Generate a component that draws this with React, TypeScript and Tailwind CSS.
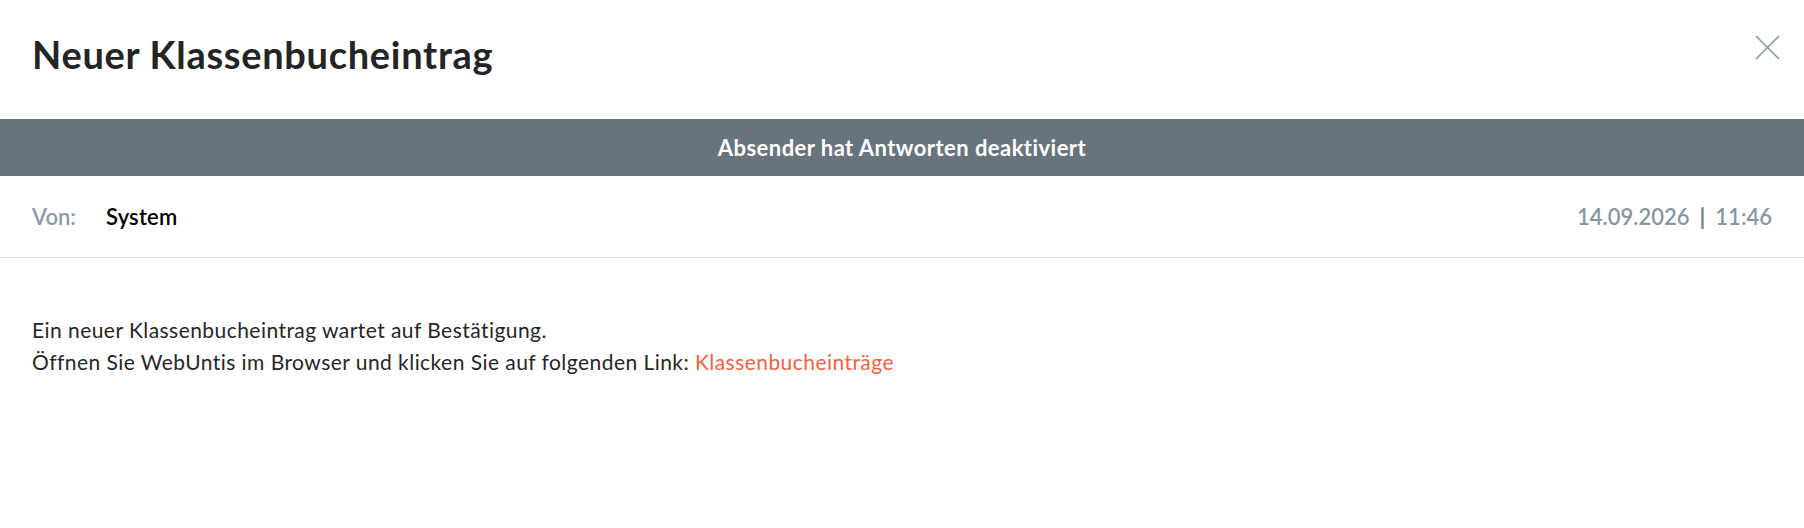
export default function App() {
  return (
    <div className="w-full min-h-[528px] bg-white font-['Lato','Noto_Sans',sans-serif] text-[#262626]">
      {/* Header */}
      <div className="h-[119px] flex items-start justify-between px-8">
        <h1 className="pt-[32px] text-[38px] leading-[44px] font-bold tracking-[0.7px] text-[#242424]">
          Neuer Klassenbucheintrag
        </h1>
        <button className="mt-[35px] -mr-2 text-[#8796a3]">
          <svg width="25" height="25" viewBox="0 0 25 25" fill="none" stroke="currentColor" strokeWidth="1.6">
            <path d="M1 1L24 24M24 1L1 24" />
          </svg>
        </button>
      </div>

      {/* Notice bar */}
      <div className="h-[57px] bg-[#68747d] flex items-center justify-center">
        <span className="text-[22px] font-bold tracking-[0.45px] text-white">Absender hat Antworten deaktiviert</span>
      </div>

      {/* Sender row */}
      <div className="h-[82px] flex items-center justify-between px-8 border-b border-[#dcdee4]">
        <div className="flex items-center">
          <span className="w-[74px] text-[22px] font-semibold text-[#8e9aa5]">Von:</span>
          <span className="text-[22px] font-semibold tracking-[0.2px] text-black">System</span>
        </div>
        <div className="flex items-center gap-[10px] text-[22px] font-semibold text-[#8a96a1]">
          <span>14.09.2026</span>
          <span className="font-black text-[#7d8892]">|</span>
          <span>11:46</span>
        </div>
      </div>

      {/* Body */}
      <div className="px-8 pt-[56px] text-[21px] leading-[32px] tracking-[0.45px] text-[#262626]">
        <p>Ein neuer Klassenbucheintrag wartet auf Bestätigung.</p>
        <p>
          Öffnen Sie WebUntis im Browser und klicken Sie auf folgenden Link:{" "}
          <a className="text-[#f5603f] cursor-pointer">Klassenbucheinträge</a>
        </p>
      </div>
    </div>
  );
}
